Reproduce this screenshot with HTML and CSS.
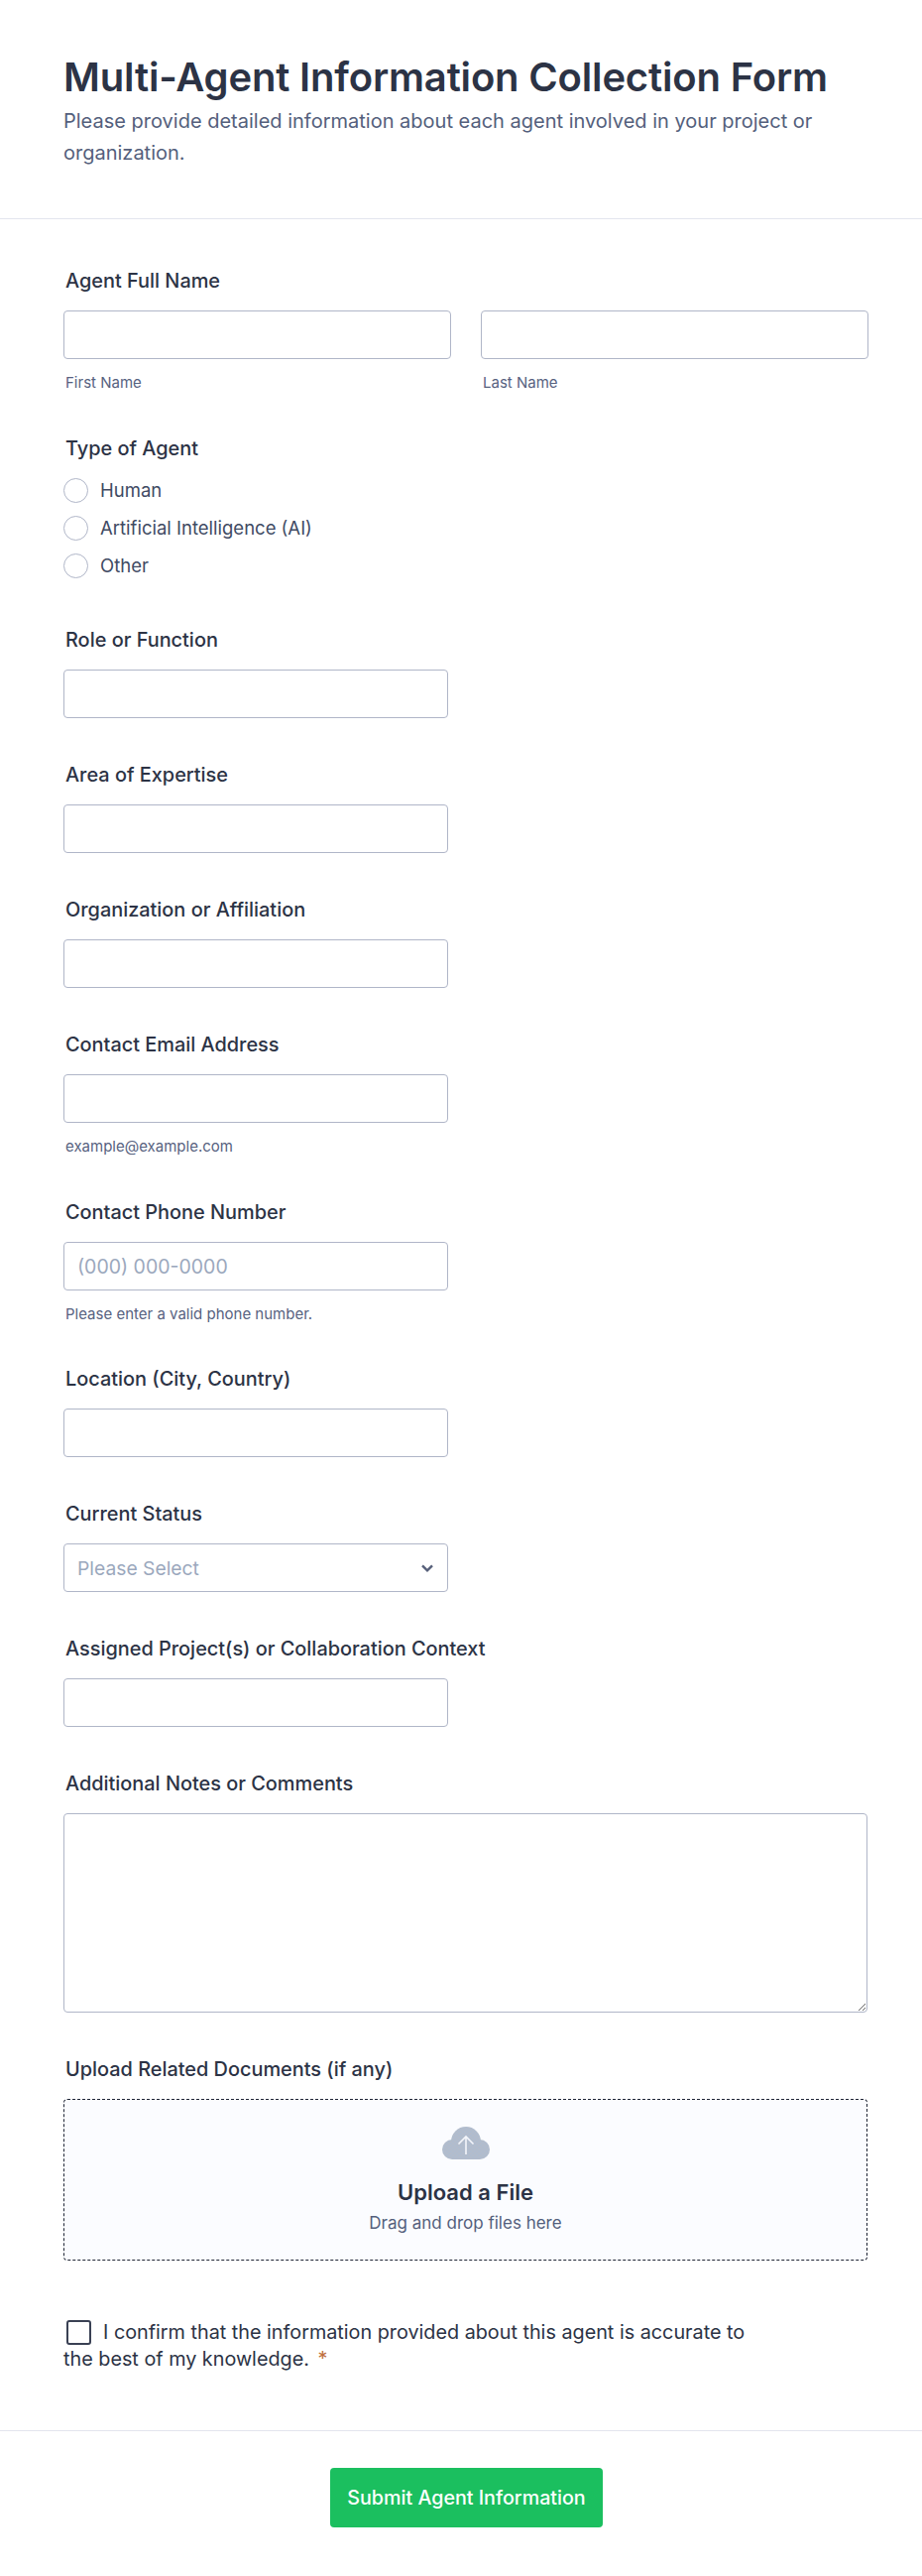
FILE: index.html
```html
<!DOCTYPE html>
<html lang="en">
<head>
<meta charset="utf-8">
<title>Multi-Agent Information Collection Form</title>
<link rel="stylesheet" href="styles.css">
</head>
<body>
<form class="form">
  <header class="head">
    <h1 class="title">Multi-Agent Information Collection Form</h1>
    <p class="subtitle">Please provide detailed information about each agent involved in your project or organization.</p>
  </header>
  <div class="fields">
    <div class="field">
      <label class="label">Agent Full Name</label>
      <div class="name-row">
        <div class="name-col"><input class="input input-full" type="text"><span class="hint">First Name</span></div>
        <div class="name-col"><input class="input input-full" type="text"><span class="hint">Last Name</span></div>
      </div>
    </div>
    <div class="field field-radio">
      <label class="label">Type of Agent</label>
      <div class="radios">
        <div class="radio"><span class="radio-dot"></span><span class="radio-text">Human</span></div>
        <div class="radio"><span class="radio-dot"></span><span class="radio-text">Artificial Intelligence (AI)</span></div>
        <div class="radio"><span class="radio-dot"></span><span class="radio-text">Other</span></div>
      </div>
    </div>
    <div class="field"><label class="label">Role or Function</label><input class="input" type="text"></div>
    <div class="field"><label class="label">Area of Expertise</label><input class="input" type="text"></div>
    <div class="field"><label class="label">Organization or Affiliation</label><input class="input" type="text"></div>
    <div class="field"><label class="label">Contact Email Address</label><input class="input" type="text"><span class="hint">example@example.com</span></div>
    <div class="field field-phone"><label class="label">Contact Phone Number</label><input class="input" type="text" placeholder="(000) 000-0000"><span class="hint">Please enter a valid phone number.</span></div>
    <div class="field"><label class="label">Location (City, Country)</label><input class="input" type="text"></div>
    <div class="field">
      <label class="label">Current Status</label>
      <div class="select">
        <span class="select-text">Please Select</span>
        <svg class="chevron" width="12" height="8" viewBox="0 0 12 8" aria-hidden="true"><path d="M1 1.300 6 6.300l5-5" fill="none" stroke="#57607a" stroke-width="2.400"/></svg>
      </div>
    </div>
    <div class="field"><label class="label">Assigned Project(s) or Collaboration Context</label><input class="input" type="text"></div>
    <div class="field"><label class="label">Additional Notes or Comments</label><textarea class="textarea"></textarea></div>
    <div class="field field-upload">
      <label class="label">Upload Related Documents (if any)</label>
      <div class="upload">
        <svg class="cloud" width="48" height="33" viewBox="0 0 48 33" aria-hidden="true">
          <defs>
            <pattern id="dots" width="4" height="4" patternUnits="userSpaceOnUse">
              <rect width="4" height="4" fill="#b3bccb"/>
              <circle cx="1" cy="1" r=".5" fill="#a3bfe0"/>
              <circle cx="3" cy="3" r=".5" fill="#a3bfe0"/>
            </pattern>
          </defs>
          <circle cx="24" cy="15" r="15" fill="url(#dots)"/>
          <circle cx="10" cy="23" r="10" fill="url(#dots)"/>
          <circle cx="38" cy="23" r="10" fill="url(#dots)"/>
          <rect x="10" y="18" width="28" height="15" fill="url(#dots)"/>
          <path d="M24 28V10M16.500 17.500 24 10l7.500 7.500" fill="none" stroke="#f4f6fb" stroke-width="1.600"/>
        </svg>
        <span class="upload-title">Upload a File</span>
        <span class="upload-sub">Drag and drop files here</span>
      </div>
    </div>
    <div class="confirm">
      <p class="confirm-text"><span class="check"></span>I confirm that the information provided about this agent is accurate to the best of my knowledge. <span class="star">*</span></p>
    </div>
  </div>
  <footer class="foot"><button class="submit" type="button">Submit Agent Information</button></footer>
</form>
</body>
</html>
```
FILE: styles.css
```css
* { box-sizing: border-box; }
html, body { margin: 0; padding: 0; background: #fff; }
body { font-family: Inter, "Liberation Sans", sans-serif; color: #2c3345; }
.form { width: 930px; min-height: 2597px; }
.head { height: 221px; padding: 49px 64px 0; border-bottom: 1px solid #e3e5ee; }
.title { margin: 0; font-size: 40px; line-height: 57px; font-weight: 600; letter-spacing: -0.17px; color: #2c3345; }
.subtitle { margin: 0; font-size: 20px; line-height: 32px; color: #545f7c; width: 780px; }
.fields { padding: 48px 64px 58px; border-bottom: 1px solid #e3e5ee; }
.field { margin-bottom: 43px; }
.field-radio { margin-bottom: 48px; }
.field-phone { margin-bottom: 42px; }
.field-upload { margin-bottom: 59px; }
.label { display: block; margin: 0 0 16px 2px; font-size: 19.900px; line-height: 28px; font-weight: 450; color: #2c3345; height: 28px; }
.input { display: block; width: 388px; height: 49px; padding: 0 13px; border: 1px solid #b0b6c8; border-radius: 4px; background: #fff; font: 19.500px/28px Inter, sans-serif; outline: 0; }
.input-full { width: 391px; }
.input::placeholder { color: #9ba8bd; opacity: 1; }
.name-row { display: flex; gap: 30px; }
.name-col { width: 391px; }
.hint { display: block; margin: 14px 0 0 2px; font-size: 15px; line-height: 19px; color: #57627f; }
.radios { display: flex; flex-direction: column; gap: 12px; margin-top: -1px; }
.radio { display: flex; align-items: center; height: 26px; }
.radio-dot { width: 25px; height: 25px; border: 1px solid #b0b6c8; border-radius: 50%; margin-right: 12px; }
.radio-text { font-size: 18.500px; color: #404a63; }
.select { display: flex; align-items: center; justify-content: space-between; width: 388px; height: 49px; padding: 0 14px 0 13px; border: 1px solid #b0b6c8; border-radius: 4px; }
.select-text { font-size: 19.300px; color: #9ba8bd; }
.textarea { display: block; width: 811px; height: 201px; border: 1px solid #b0b6c8; border-radius: 4px; outline: 0; }
.upload { display: flex; flex-direction: column; align-items: center; width: 811px; height: 163px; padding-top: 27px; border: 1px dashed #1f2535; border-radius: 4px; background: #fbfcff; }
.upload-title { margin-top: 18px; font-size: 22px; line-height: 30px; font-weight: 600; color: #2c3345; }
.upload-sub { margin-top: 1px; font-size: 17px; line-height: 30px; color: #545f7c; }
.confirm { width: 714px; }
.confirm-text { margin: 0; font-size: 19.800px; line-height: 27px; color: #2c3345; }
.check { display: inline-block; width: 25px; height: 25px; margin: 0 12px 0 3px; border: 2px solid #3a4154; border-radius: 3px; vertical-align: -6px; }
.star { color: #c0703c; margin-left: 3px; }
.foot { display: flex; justify-content: center; padding: 37px 0 0 11px; }
.submit { width: 275px; height: 60px; border: 0; border-radius: 4px; background: #1bbf5f; color: #fff; font: 500 19.700px Inter, sans-serif; }
```
